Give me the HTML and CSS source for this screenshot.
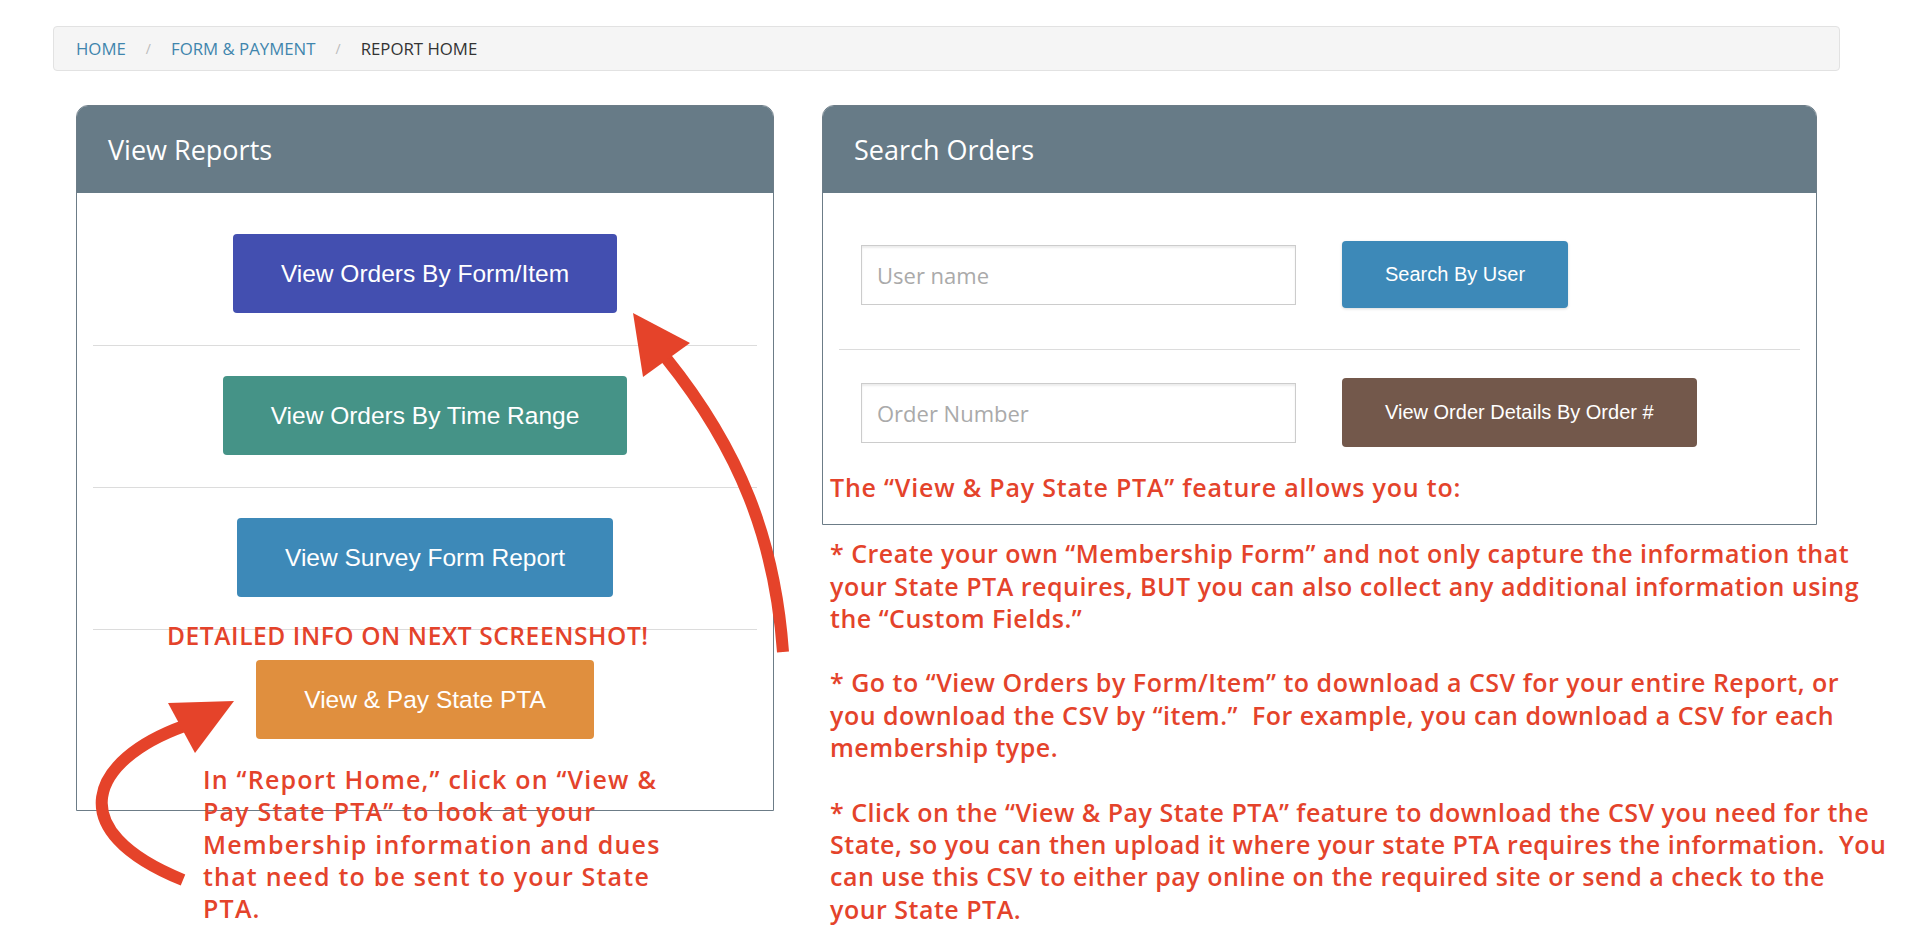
FILE: index.html
```html
<!DOCTYPE html>
<html lang="en">
<head>
    <meta charset="UTF-8">
    <meta name="viewport" content="width=device-width, initial-scale=1.0">
    <title>Report Home</title>
    <link rel="stylesheet" href="styles.css">
</head>
<body>
<div class="page">

    <!-- breadcrumb -->
    <ol class="breadcrumb">
        <li><a href="#">Home</a></li>
        <li class="sep">/</li>
        <li><a href="#">Form &amp; Payment</a></li>
        <li class="sep">/</li>
        <li class="active">Report Home</li>
    </ol>

    <div class="columns">

        <!-- left column -->
        <div class="col col-left">
            <section class="panel panel-reports">
                <div class="panel-heading">View Reports</div>
                <div class="panel-body">
                    <div class="report-row"><a class="btn btn-indigo" href="#">View Orders By Form/Item</a></div>
                    <div class="report-row"><a class="btn btn-teal" href="#">View Orders By Time Range</a></div>
                    <div class="report-row"><a class="btn btn-blue" href="#">View Survey Form Report</a></div>
                    <div class="report-row"><a class="btn btn-orange" href="#">View &amp; Pay State PTA</a></div>
                </div>
            </section>

            <p class="note note-detail">DETAILED INFO ON NEXT SCREENSHOT!</p>
            <p class="note note-home">In “Report Home,” click on “View &amp;<br>Pay State PTA” to look at your<br>Membership information and dues<br>that need to be sent to your State<br>PTA.</p>
        </div>

        <!-- right column -->
        <div class="col col-right">
            <section class="panel panel-search">
                <div class="panel-heading">Search Orders</div>
                <div class="panel-body">
                    <div class="search-row">
                        <input class="field" type="text" placeholder="User name">
                        <a class="btn btn-small btn-blue btn-user" href="#">Search By User</a>
                    </div>
                    <div class="search-row search-row-last">
                        <input class="field" type="text" placeholder="Order Number">
                        <a class="btn btn-small btn-brown" href="#">View Order Details By Order #</a>
                    </div>
                    <p class="note note-feature">The “View &amp; Pay State PTA” feature allows you to:</p>
                </div>
            </section>

            <p class="note note-list">* Create your own “Membership Form” and not only capture the information that<br>your State PTA requires, BUT you can also collect any additional information using<br>the “Custom Fields.”<br><br>* Go to “View Orders by Form/Item” to download a CSV for your entire Report, or<br>you download the CSV by “item.”&nbsp; For example, you can download a CSV for each<br>membership type.<br><br>* Click on the “View &amp; Pay State PTA” feature to download the CSV you need for the<br>State, so you can then upload it where your state PTA requires the information.&nbsp; You<br>can use this CSV to either pay online on the required site or send a check to the<br>your State PTA.</p>
        </div>
    </div>

    <!-- annotation arrows -->
    <svg class="arrows" width="1920" height="927" viewBox="0 0 1920 927">
        <path d="M783,652 C775,540 740,450 666,358" fill="none" stroke="#e5432a" stroke-width="12"/>
        <polygon points="633,313 690,343 643,377" fill="#e5432a"/>
        <path d="M183,880 C60,830 90,760 184,726" fill="none" stroke="#e5432a" stroke-width="12"/>
        <polygon points="234,701 168,703 195,753" fill="#e5432a"/>
    </svg>
</div>
</body>
</html>
```

FILE: styles.css
```css
body {
    margin: 0;
    background-color: #fff;
    font-family: 'Open Sans', sans-serif;
    color: #333;
}

.page {
    position: relative;
    height: 927px;
    padding: 26px 80px 0 53px;
    box-sizing: border-box;
    overflow: hidden;
}

/* breadcrumb */
.breadcrumb {
    display: flex;
    align-items: center;
    height: 45px;
    margin: 0;
    padding: 0 0 0 22px;
    list-style: none;
    background-color: #f5f5f5;
    border: 1px solid #e2e2e2;
    border-radius: 4px;
    box-sizing: border-box;
    font-size: 16.8px;
    text-transform: uppercase;
}

.breadcrumb a {
    color: #3f85ad;
    text-decoration: none;
}

.breadcrumb .sep {
    margin: 0 20px;
    color: #bbb;
    font-size: 14px;
}

.breadcrumb .active {
    color: #333;
}

/* columns */
.columns {
    display: flex;
    gap: 48px;
    margin-top: 34px;
    padding-left: 23px;
}

.col {
    position: relative;
}

.col-left {
    width: 698px;
}

.col-right {
    width: 995px;
}

/* panels */
.panel {
    border: 1px solid #6c7c87;
    border-radius: 12px 12px 0 0;
    overflow: hidden;
    background-color: #fff;
}

.panel-heading {
    height: 87px;
    line-height: 87px;
    padding-left: 31px;
    background-color: #677b87;
    color: #fff;
    font-size: 27px;
}

.panel-reports .panel-body {
    padding: 11px 0 71px;
}

.report-row {
    margin: 0 16px;
    padding: 30px 0 32px;
    border-bottom: 1px solid #dcdcdc;
    text-align: center;
}

.report-row:last-child {
    padding-bottom: 0;
    border-bottom: none;
}

/* buttons */
.btn {
    display: inline-block;
    height: 79px;
    line-height: 79px;
    padding: 0 48px;
    border-radius: 4px;
    color: #fff;
    font-family: 'Liberation Sans', Arial, sans-serif;
    font-size: 24.5px;
    text-decoration: none;
}

.btn-indigo { background-color: #434fb0; }
.btn-teal { background-color: #459387; }
.btn-blue { background-color: #3d89b8; }
.btn-orange { background-color: #e08f3e; }
.btn-brown { background-color: #73584b; }

.btn-small {
    font-size: 20px;
    padding: 0 43px;
}

.btn-user {
    height: 67px;
    line-height: 67px;
    box-shadow: 0 1px 3px rgba(0, 0, 0, 0.15);
}

.btn-brown {
    height: 69px;
    line-height: 69px;
}

/* search form */
.search-row {
    display: flex;
    align-items: center;
    gap: 46px;
    margin: 0 16px;
    padding: 48px 0 41px 22px;
    border-bottom: 1px solid #dcdcdc;
}

.search-row-last {
    padding: 28px 0 0 22px;
    border-bottom: none;
}

.field {
    width: 435px;
    height: 60px;
    padding: 0 15px;
    box-sizing: border-box;
    border: 1px solid #ccc;
    box-shadow: inset 0 2px 2px rgba(0, 0, 0, 0.08);
    font-family: 'Open Sans', sans-serif;
    font-size: 22px;
    color: #555;
}

.field::placeholder {
    color: #aaa;
}

/* red annotations */
.note {
    margin: 0;
    color: #e4432b;
    font-family: 'Open Sans', sans-serif;
    font-weight: 600;
    font-size: 25px;
    letter-spacing: 0.5px;
    line-height: 32.3px;
    white-space: nowrap;
}

.note-feature {
    margin: 24px 0 0 7px;
    padding-bottom: 21px;
    letter-spacing: 0.8px;
}

.note-list {
    margin-top: 12px;
    padding-left: 8px;
}

.note-detail {
    position: absolute;
    top: 516px;
    left: 91px;
    font-size: 24.5px;
    letter-spacing: 0.6px;
    line-height: 30px;
}

.note-home {
    position: absolute;
    top: 658px;
    left: 127px;
    letter-spacing: 1.2px;
}

.arrows {
    position: absolute;
    top: 0;
    left: 0;
    pointer-events: none;
}
```
